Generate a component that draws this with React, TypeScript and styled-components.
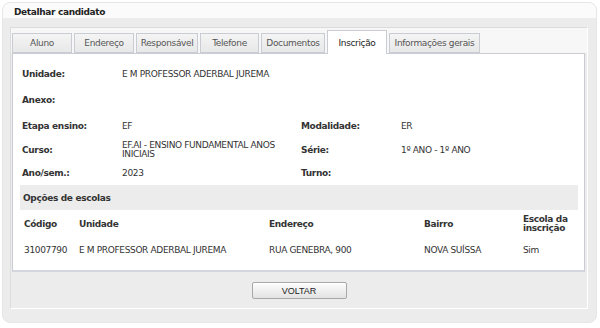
import React from 'react';
import styled, { createGlobalStyle } from 'styled-components';

const GlobalStyle = createGlobalStyle`
  body {
    margin: 0;
    background: #ffffff;
    font-family: 'DejaVu Sans', Verdana, sans-serif;
    font-size: 9px;
    letter-spacing: -0.35px;
    color: #333;
  }
`;

const tabs = ['Aluno', 'Endereço', 'Responsável', 'Telefone', 'Documentos', 'Inscrição', 'Informações gerais'];
const tabWidths = [60, 60, 62, 59, 64, 60, 91];

interface Field {
  label: string;
  value?: string;
  label2?: string;
  value2?: string;
}

const fields: Field[] = [
  { label: 'Unidade:', value: 'E M PROFESSOR ADERBAL JUREMA' },
  { label: 'Anexo:' },
  { label: 'Etapa ensino:', value: 'EF', label2: 'Modalidade:', value2: 'ER' },
  { label: 'Curso:', value: 'EF.AI - ENSINO FUNDAMENTAL ANOS INICIAIS', label2: 'Série:', value2: '1º ANO - 1º ANO' },
  { label: 'Ano/sem.:', value: '2023', label2: 'Turno:' },
];

const App = () => {
  return (
    <>
      <GlobalStyle />
      <Panel>
        <Header>Detalhar candidato</Header>
        <Body>
          <Inner>
            <TabBar>
              {tabs.map((t, i) => (
                <Tab key={t} active={t === 'Inscrição'} style={{ width: tabWidths[i] }}>
                  {t}
                </Tab>
              ))}
            </TabBar>
            <Content>
              <Fields>
                {fields.map((f) => (
                  <FieldRow key={f.label}>
                    <Label>{f.label}</Label>
                    <Value>{f.value}</Value>
                    <Label>{f.label2}</Label>
                    <Value>{f.value2}</Value>
                  </FieldRow>
                ))}
              </Fields>
              <SectionBar>Opções de escolas</SectionBar>
              <Table>
                <colgroup>
                  <col style={{ width: 55 }} />
                  <col style={{ width: 190 }} />
                  <col style={{ width: 155 }} />
                  <col style={{ width: 99 }} />
                  <col />
                </colgroup>
                <thead>
                  <tr>
                    <Th>Código</Th>
                    <Th>Unidade</Th>
                    <Th>Endereço</Th>
                    <Th>Bairro</Th>
                    <Th>
                      Escola da
                      <br />
                      inscrição
                    </Th>
                  </tr>
                </thead>
                <tbody>
                  <tr>
                    <Td>31007790</Td>
                    <Td>E M PROFESSOR ADERBAL JUREMA</Td>
                    <Td>RUA GENEBRA, 900</Td>
                    <Td>NOVA SUÍSSA</Td>
                    <Td>Sim</Td>
                  </tr>
                </tbody>
              </Table>
            </Content>
            <Footer>
              <Button>VOLTAR</Button>
            </Footer>
          </Inner>
        </Body>
      </Panel>
    </>
  );
};

export default App;

const Panel = styled.div`
  margin: 2px 2px 0 2px;
  width: 595px;
  height: 321px;
  box-sizing: border-box;
  background: #ececec;
  border: 1px solid #e6e6e6;
  border-radius: 8px;
  overflow: hidden;
`;

const Header = styled.div`
  height: 15px;
  background: #fbfbfb;
  padding: 3px 0 0 11px;
  box-sizing: border-box;
  font-weight: bold;
  font-size: 9px;
  color: #222;
  line-height: 12px;
`;

const Body = styled.div`
  padding: 9px 8px 0 7px;
`;

const Inner = styled.div`
  border: 1px solid #dcdcdc;
  border-right-color: #fff;
  border-bottom-color: #fff;
  background: #ececec;
  box-sizing: border-box;
  height: 282px;
`;

const TabBar = styled.div`
  display: flex;
  gap: 2px;
  align-items: flex-end;
  height: 25px;
  padding: 0 1px 0 1px;
  background: #f7f7f7;
`;

const Tab = styled.div<{ active?: boolean }>`
  box-sizing: border-box;
  height: ${(p) => (p.active ? '24px' : '20px')};
  margin-bottom: ${(p) => (p.active ? '-1px' : '0')};
  border: 1px solid #c9ccd3;
  border-bottom: ${(p) => (p.active ? 'none' : '1px solid #c9ccd3')};
  background: ${(p) => (p.active ? '#ffffff' : 'linear-gradient(#f4f4f4, #e8e8e8)')};
  color: ${(p) => (p.active ? '#222' : '#555')};
  display: flex;
  align-items: center;
  justify-content: center;
  font-size: 9px;
  white-space: nowrap;
  position: relative;
  z-index: ${(p) => (p.active ? 1 : 0)};
`;

const Content = styled.div`
  margin: 0 2px 0 1px;
  background: #fff;
  border: 1px solid #c9ccd3;
  border-bottom: 2px solid #d3d7dd;
  height: 219px;
  box-sizing: border-box;
  padding: 7px 6px 0 9px;
`;

const Fields = styled.div`
  display: flex;
  flex-direction: column;
`;

const FieldRow = styled.div`
  display: grid;
  grid-template-columns: 100px 179px 100px 1fr;
  align-items: center;
  min-height: 26px;
  &:nth-child(4) {
    min-height: 22px;
  }
  &:nth-child(5) {
    min-height: 24px;
  }
`;

const Label = styled.div`
  font-weight: bold;
  color: #333;
`;

const Value = styled.div`
  color: #333;
  line-height: 9px;
`;

const SectionBar = styled.div`
  background: #ececec;
  height: 25px;
  display: flex;
  align-items: center;
  padding-left: 1px;
  font-weight: bold;
  color: #333;
  margin: 0 0 0 -2px;
  padding-left: 3px;
`;

const Table = styled.table`
  border-collapse: collapse;
  table-layout: fixed;
  width: 100%;
  margin-top: 1px;
`;

const Th = styled.th`
  text-align: left;
  font-weight: bold;
  color: #333;
  padding: 0 0 0 2px;
  line-height: 9px;
  vertical-align: middle;
  height: 26px;
`;

const Td = styled.td`
  color: #333;
  padding: 0 0 0 2px;
  height: 26px;
  vertical-align: middle;
`;

const Footer = styled.div`
  display: flex;
  justify-content: center;
  padding-top: 10px;
`;

const Button = styled.button`
  width: 95px;
  height: 17px;
  border: 1px solid #a8a8a8;
  border-radius: 2px;
  background: linear-gradient(#fdfdfd, #e2e2e2);
  font-family: 'Liberation Sans', Arial, sans-serif;
  font-size: 9px;
  letter-spacing: 0;
  color: #222;
  padding: 0;
  box-shadow: 0 1px 0 #fff inset;
`;
